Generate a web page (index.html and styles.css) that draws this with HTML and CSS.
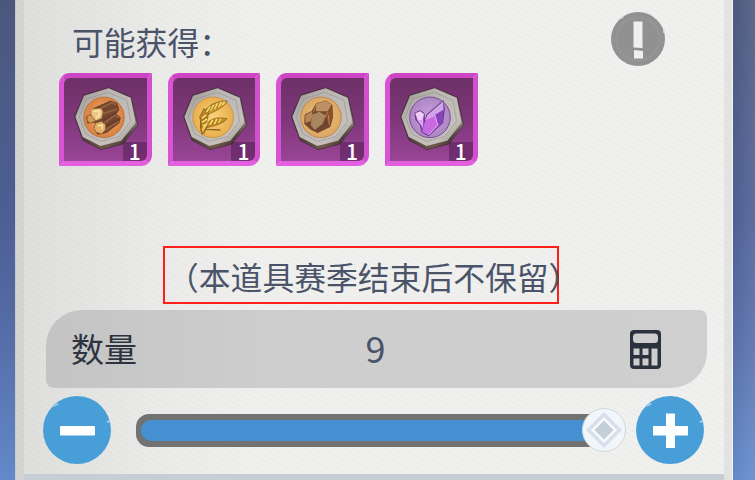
FILE: index.html
```html
<!DOCTYPE html>
<html lang="zh-CN">
<head>
  <meta charset="UTF-8" />
  <meta name="viewport" content="width=device-width, initial-scale=1.0" />
  <title>道具详情</title>
  <link rel="stylesheet" href="styles.css">
</head>
<body>
  <!-- shared coin shape -->
  <svg class="defs" width="0" height="0">
    <defs>
      <linearGradient id="metal" x1="0" y1="0" x2="1" y2="1">
        <stop offset="0" stop-color="#99938f" />
        <stop offset="0.3" stop-color="#b9b5b2" />
        <stop offset="0.75" stop-color="#c5c0bb" />
        <stop offset="1" stop-color="#857c75" />
      </linearGradient>
      <linearGradient id="edge" x1="0" y1="0" x2="1" y2="0">
        <stop offset="0" stop-color="#3b3432" />
        <stop offset="0.5" stop-color="#75584a" />
        <stop offset="0.8" stop-color="#4a3c36" />
        <stop offset="1" stop-color="#82766c" />
      </linearGradient>
      <radialGradient id="wood"><stop offset="0" stop-color="#f2b27a" /><stop offset="1" stop-color="#d9803f" /></radialGradient>
      <radialGradient id="gold"><stop offset="0" stop-color="#f8d27c" /><stop offset="1" stop-color="#e8ae4c" /></radialGradient>
      <radialGradient id="sand"><stop offset="0" stop-color="#edc282" /><stop offset="1" stop-color="#dca660" /></radialGradient>
      <radialGradient id="violet"><stop offset="0" stop-color="#c9a2da" /><stop offset="1" stop-color="#ad86c4" /></radialGradient>
      <g id="coin">
        <path d="M175 68 243 97 262 180 218 237 152 254 98 226 73 155 100 90Z" fill="url(#edge)" stroke="#382a35" stroke-width="2" />
        <path d="M175 70 241 98 256 174 213 227 150 243 97 216 75 155 101 92Z" fill="url(#metal)" />
        <path d="M173 82 230 106 241 169 205 215 151 229 106 206 87 155 109 102Z" fill="none" stroke="#8b8583" stroke-width="2" stroke-dasharray="5 2" />
      </g>
    </defs>
  </svg>

  <div class="panel">
    <div class="header">
      <div class="title">可能获得：</div>
      <svg class="info" viewBox="0 0 54 54">
        <circle cx="27" cy="27" r="27" fill="#919191" />
        <circle cx="27" cy="27" r="21.500" fill="none" stroke="#969696" stroke-width="2" />
        <path d="M9 6l3-2 1 1-3 2zM52 19l2-1v2l-2 1z" fill="#dcdcdc" />
        <path d="M22.500 9.500h9v26.500l-9-.500zM23 38l9 1v7.500h-9z" fill="#efefef" />
      </svg>
    </div>

    <div class="items">
      <div class="item">
        <svg class="item-icon" viewBox="27 24 277 279">
          <use href="#coin" />
          <circle cx="161" cy="157" r="61" fill="url(#wood)" stroke="#ad6a38" stroke-width="2" />
          <path d="M128 131 180 108 200 115 206 136 196 145 210 158 206 174 168 203 142 208 132 190 138 172 112 174 109 155 122 149Z" fill="#754630" stroke="#5e3626" stroke-width="2" />
          <path d="M152 130 184 113 198 119M158 146 202 132M160 176 194 150 207 158M165 195 205 169" fill="none" stroke="#95613f" stroke-width="5" />
          <path d="M158 165 202 141M160 186 208 162" stroke="#5a3426" stroke-width="3" />
          <path d="M122 132 152 130 158 140 154 160 135 168 122 154Z" fill="#ecc681" stroke="#9c6535" stroke-width="2" />
          <path d="M136 174 153 169 166 179 165 195 154 207 138 202 131 190Z" fill="#e2b065" stroke="#8a542d" stroke-width="2" />
          <path d="M110 153 122 149 136 168 120 175 111 168Z" fill="#cf9a57" stroke="#8a542d" stroke-width="2" />
          <path d="M130 140 146 137 147 152 137 158M142 182 156 180 155 194" fill="none" stroke="#fbe9ae" stroke-width="4" />
        </svg>
        <span class="count">1</span>
      </div>
      <div class="item">
        <svg class="item-icon" viewBox="27 24 277 279">
          <use href="#coin" />
          <circle cx="161" cy="157" r="61" fill="url(#gold)" stroke="#c08b38" stroke-width="2" />
          <path d="M130 209C116 180 126 135 165 116M133 206C140 180 165 168 198 166M140 193 183 195" fill="none" stroke="#8f651e" stroke-width="4" />
          <path d="M132 148C146 120 174 106 204 108 194 128 168 138 142 150Z" fill="#cf9a2b" stroke="#7d5818" stroke-width="2" />
          <path d="M144 176C156 158 178 156 203 161 190 177 166 182 142 188Z" fill="#c48d24" stroke="#7d5818" stroke-width="2" />
          <path d="M127 188 121 155 134 130 148 145 142 170Z" fill="#b98125" stroke="#7d5818" stroke-width="2" />
          <path d="M142 141 152 125M153 137 163 120M165 132 174 115M177 126 186 111M189 120 196 110M152 179 160 165M164 177 173 162M177 173 184 161M128 160 140 150M128 172 143 162M130 183 144 176" stroke="#f6da6b" stroke-width="5" />
          <path d="M147 141 157 126M159 137 168 121M171 131 180 115M158 179 167 166M171 176 180 163M128 166 141 156" stroke="#855d1c" stroke-width="2" />
        </svg>
        <span class="count">1</span>
      </div>
      <div class="item">
        <svg class="item-icon" viewBox="27 24 277 279">
          <use href="#coin" />
          <circle cx="161" cy="157" r="61" fill="url(#sand)" stroke="#ad7942" stroke-width="2" />
          <path d="M147 116 176 108 194 120 196 157 188 185 151 203 130 193 112 176 113 149 134 139Z" fill="#75482e" stroke="#5d3d2c" stroke-width="2" />
          <path d="M147 116 176 108 193 119 181 139 146 139Z" fill="#bd9164" />
          <path d="M181 139 193 121 195 157 185 176 174 157Z" fill="#8d512a" />
          <path d="M135 149 155 141 174 153 162 180 143 195 130 181Z" fill="#a98662" />
          <path d="M174 153 185 176 152 200 143 195 162 180Z" fill="#704330" />
          <path d="M114 151 133 140 136 149 130 169 114 174Z" fill="#b58656" />
          <path d="M148 117 138 142M155 142 175 153 163 180M181 140 175 153M183 150 186 180" fill="none" stroke="#d39b5c" stroke-width="2" />
        </svg>
        <span class="count">1</span>
      </div>
      <div class="item">
        <svg class="item-icon" viewBox="27 24 277 279">
          <use href="#coin" />
          <circle cx="161" cy="157" r="61" fill="url(#violet)" stroke="#765092" stroke-width="3" />
          <path d="M152 148 201 107 204 132 199 174 157 212 137 202 132 180 119 165 116 144 131 137 143 145 145 172Z" fill="#9650c4" stroke="#65358a" stroke-width="3" />
          <path d="M154 149 201 109 201 135 176 150 148 162Z" fill="#d0a5e8" />
          <path d="M148 163 176 150 186 180 157 210 138 201Z" fill="#c86be2" />
          <path d="M176 150 201 135 198 173 184 181Z" fill="#8743ba" />
          <path d="M117 145 131 139 143 147 139 164 125 168Z" fill="#f2cdf5" />
          <path d="M125 168 140 164 140 190 134 180Z" fill="#dda8eb" />
          <path d="M147 163 176 151 184 180M157 209 184 181" fill="none" stroke="#eeb0f3" stroke-width="3" />
        </svg>
        <span class="count">1</span>
      </div>
    </div>

    <div class="notice">（本道具赛季结束后不保留）</div>

    <div class="quantity">
      <span class="label">数量</span>
      <span class="value">9</span>
      <svg class="calc" viewBox="0 0 31 39">
        <rect width="31" height="39" rx="4" fill="#2b323e" />
        <rect x="3" y="3.500" width="25" height="9.500" rx="3.500" fill="#cecece" />
        <path d="M3.500 18.500h6v6.500h-6zM12.500 18.500h6v6.500h-6zM3.500 28.500h6v7h-6zM12.500 28.500h6v7h-6zM21.500 18.500h6v17h-6z" fill="#cecece" />
      </svg>
    </div>

    <div class="controls">
      <svg class="round-btn" viewBox="0 0 68 68">
        <circle cx="34" cy="34" r="34" fill="#489fd8" />
        <path d="M10 11l4-4 2 1-5 3zM40 0h3l-1 1zM63 26l3-2 1 1-1 2z" fill="#a9d0e8" />
        <rect x="17" y="30" width="35" height="9.500" rx="1" fill="#fff" />
      </svg>
      <div class="slider">
        <div class="fill"></div>
        <svg class="thumb" viewBox="0 0 44 44">
          <circle cx="22" cy="22" r="21.500" fill="#f1f6fa" stroke="#d1d6da" />
          <path d="M22 4 40 22 22 40 4 22Z" fill="#d7e0ea" />
          <path d="M22 9 35 22 22 35 9 22Z" fill="#f7fafc" />
          <path d="M22 12.500 31.500 22 22 31.500 12.500 22Z" fill="#c3cfd9" />
        </svg>
      </div>
      <svg class="round-btn" viewBox="0 0 68 68">
        <circle cx="34" cy="34" r="34" fill="#489fd8" />
        <path d="M10 11l4-4 2 1-5 3zM40 0h3l-1 1zM63 26l3-2 1 1-1 2z" fill="#a9d0e8" />
        <path d="M30 17.500h9v12.500h13v9.500H39v12.500h-9V39.500H17V30h13z" fill="#fff" />
      </svg>
    </div>

    <div class="footer"></div>
  </div>
</body>
</html>
```
FILE: styles.css
```css
body, html {
  margin: 0;
  padding: 0;
  height: 100%;
  overflow: hidden;
  font-family: "Noto Sans CJK SC", sans-serif;
}
body {
  display: flex;
  background: linear-gradient(to right, transparent 732px, rgba(255,255,255,0.1)), linear-gradient(#4b587d, #4d5e94 45%, #566da7 70%, #6289ca);
}
.defs {
  position: absolute;
}
.panel {
  box-sizing: border-box;
  display: flex;
  flex-direction: column;
  width: 718px;
  height: 480px;
  margin-left: 15px;
  padding: 0 9px;
  border-left: 1px solid #c8c9c9;
  border-right: 1px solid #f4f4f3;
  background:
    linear-gradient(to right, rgba(0,0,0,0.05) 8px, transparent 8px, transparent 708px, rgba(0,0,0,0.05) 708px),
    repeating-linear-gradient(30deg, rgba(0,0,0,0.01) 0 2px, transparent 2px 5px),
    linear-gradient(to right, #dededd, #ebebea 20%, #f0f0ef 35%, #f0f0ef);
}
.header {
  display: flex;
  justify-content: space-between;
  height: 73px;
  padding: 0 58px 0 47px;
}
.title {
  padding-top: 18px;
  font-size: 31.8px;
  line-height: 46px;
  color: #4a5368;
}
.info {
  width: 54px;
  height: 54px;
  margin-top: 12px;
}
.items {
  display: flex;
  gap: 16px;
  padding-left: 34px;
}
.item {
  box-sizing: border-box;
  position: relative;
  width: 92.7px;
  height: 93px;
  border: 5px solid;
  border-color: #cd44c5 #d24fce #e45fe0 #d854d4;
  border-radius: 11px 1px 11px 1px;
  background: linear-gradient(#6d3066, #7e3779 50%, #9a4597);
  overflow: hidden;
}
.item-icon {
  display: block;
  width: 93px;
  height: 93px;
  margin: -5px;
}
.count {
  position: absolute;
  right: 0;
  bottom: 0;
  width: 24px;
  height: 19px;
  border-radius: 0 0 6px 0;
  background: rgba(75,25,75,0.5);
  color: #fff;
  font-size: 21px;
  font-weight: 500;
  line-height: 18px;
  text-align: center;
}
.notice {
  box-sizing: border-box;
  width: 396px;
  height: 58px;
  margin: 80px 0 6px 138px;
  padding-left: 2px;
  border: 2px solid #fb2018;
  color: #4a5368;
  font-size: 31.8px;
  line-height: 57px;
  white-space: nowrap;
}
.quantity {
  box-sizing: border-box;
  display: grid;
  grid-template-columns: 1fr 24px 1fr;
  align-items: center;
  width: 661px;
  height: 78px;
  margin-left: 21px;
  padding: 0 45px 0 25px;
  border-radius: 36px 8px 36px 8px;
  background: linear-gradient(to right, #c4c4c4, #cecece 35%, #cfcfcf);
  color: #2d3440;
}
.label {
  margin-top: -2px;
  font-size: 33px;
}
.value {
  margin: -5px -18px 0 0;
  font-size: 36px;
  text-align: center;
  color: #4a5368;
}
.calc {
  justify-self: end;
  width: 31px;
  height: 39px;
  margin-right: 1px;
}
.controls {
  display: flex;
  align-items: center;
  height: 84px;
  padding: 0 19px 0 18px;
}
.round-btn {
  flex: none;
  width: 68px;
  height: 68px;
}
.slider {
  box-sizing: border-box;
  position: relative;
  flex: 1;
  height: 33px;
  margin: 0 26px 0 25px;
  border: solid #727272;
  border-width: 6px 5px;
  border-radius: 13px;
  background: #727272;
}
.fill {
  height: 100%;
  border-radius: 10px 0 0 10px;
  background: #468fd1;
}
.thumb {
  position: absolute;
  top: -12px;
  right: -21px;
  width: 44px;
  height: 44px;
}
.footer {
  flex: 1;
  margin: 2px -1px 0;
  background: #c5ced5;
}
```
